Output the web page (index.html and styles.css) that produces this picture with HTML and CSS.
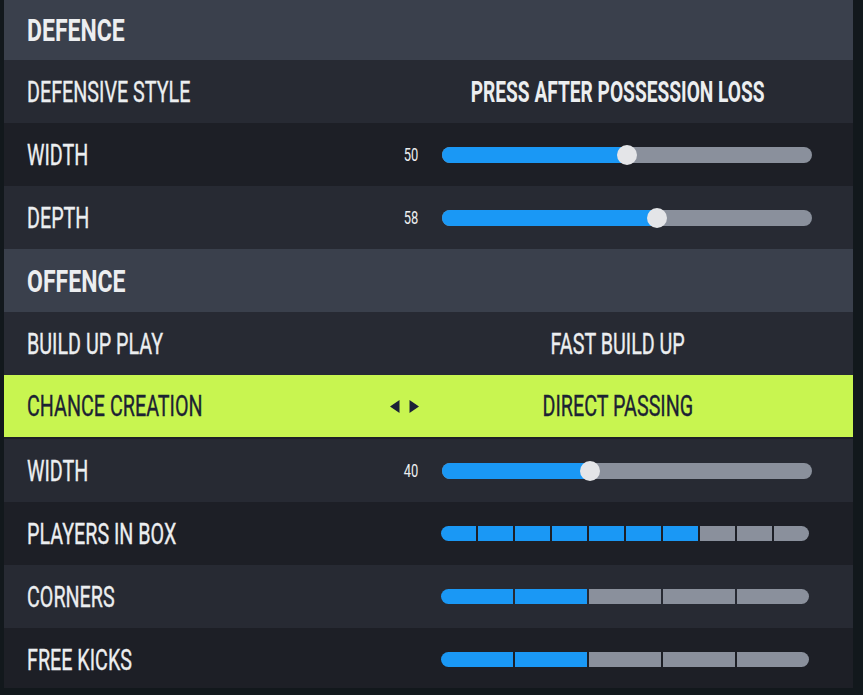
FILE: index.html
```html
<!DOCTYPE html>
<html lang="en">
<head>
    <meta charset="UTF-8">
    <meta name="viewport" content="width=device-width, initial-scale=1.0">
    <title>Team Tactics</title>
    <link rel="stylesheet" href="styles.css">
</head>
<body>
    <div class="panel">
        <div class="section first"><span class="text">DEFENCE</span></div>

        <div class="row light">
            <span class="label"><span class="text">DEFENSIVE STYLE</span></span>
            <div class="control">
                <span class="slot"></span>
                <div class="value bold"><span class="text">PRESS AFTER POSSESSION LOSS</span></div>
            </div>
        </div>

        <div class="row dark">
            <span class="label"><span class="text">WIDTH</span></span>
            <div class="control">
                <span class="slot num"><span class="text">50</span></span>
                <div class="track">
                    <div class="fill" style="width: 50%"></div>
                    <div class="thumb" style="left: 50%"></div>
                </div>
            </div>
        </div>

        <div class="row light">
            <span class="label"><span class="text">DEPTH</span></span>
            <div class="control">
                <span class="slot num"><span class="text">58</span></span>
                <div class="track">
                    <div class="fill" style="width: 58%"></div>
                    <div class="thumb" style="left: 58%"></div>
                </div>
            </div>
        </div>

        <div class="section"><span class="text">OFFENCE</span></div>

        <div class="row light">
            <span class="label"><span class="text">BUILD UP PLAY</span></span>
            <div class="control">
                <span class="slot"></span>
                <div class="value"><span class="text">FAST BUILD UP</span></div>
            </div>
        </div>

        <div class="row selected">
            <span class="label"><span class="text">CHANCE CREATION</span></span>
            <div class="control">
                <span class="slot arrows">
                    <svg width="29" height="13" viewBox="0 0 29 13">
                        <path d="M0 6.5 L9.5 0 L9.5 13 Z" fill="#1c2137"/>
                        <path d="M19.5 0 L29 6.5 L19.5 13 Z" fill="#1c2137"/>
                    </svg>
                </span>
                <div class="value"><span class="text">DIRECT PASSING</span></div>
            </div>
        </div>

        <div class="row light">
            <span class="label"><span class="text">WIDTH</span></span>
            <div class="control">
                <span class="slot num"><span class="text">40</span></span>
                <div class="track">
                    <div class="fill" style="width: 40%"></div>
                    <div class="thumb" style="left: 40%"></div>
                </div>
            </div>
        </div>

        <div class="row dark">
            <span class="label"><span class="text">PLAYERS IN BOX</span></span>
            <div class="control">
                <span class="slot"></span>
                <div class="steps">
                    <span class="step on"></span>
                    <span class="step on"></span>
                    <span class="step on"></span>
                    <span class="step on"></span>
                    <span class="step on"></span>
                    <span class="step on"></span>
                    <span class="step on"></span>
                    <span class="step"></span>
                    <span class="step"></span>
                    <span class="step"></span>
                </div>
            </div>
        </div>

        <div class="row light">
            <span class="label"><span class="text">CORNERS</span></span>
            <div class="control">
                <span class="slot"></span>
                <div class="steps">
                    <span class="step on"></span>
                    <span class="step on"></span>
                    <span class="step"></span>
                    <span class="step"></span>
                    <span class="step"></span>
                </div>
            </div>
        </div>

        <div class="row dark last">
            <span class="label"><span class="text">FREE KICKS</span></span>
            <div class="control">
                <span class="slot"></span>
                <div class="steps">
                    <span class="step on"></span>
                    <span class="step on"></span>
                    <span class="step"></span>
                    <span class="step"></span>
                    <span class="step"></span>
                </div>
            </div>
        </div>
    </div>
</body>
</html>
```

FILE: styles.css
```css
:root {
    --header: #3a404c;
    --row-light: #272a33;
    --row-dark: #1d1f26;
    --lime: #c8f550;
    --ink: #1c2233;
    --text: #eceef0;
    --blue: #1a98f5;
    --grey: #8a909c;
    --thumb: #e4e5e8;
}

* {
    margin: 0;
    padding: 0;
    box-sizing: border-box;
}

body {
    background-color: #12181c;
    font-family: Roboto, "Liberation Sans", sans-serif;
    color: var(--text);
    overflow: hidden;
}

.panel {
    width: 849px;
    margin-left: 4px;
    height: 688px;
    overflow: hidden;
}

.text {
    display: inline-block;
    white-space: nowrap;
    transform: scaleX(0.68);
    transform-origin: left center;
}

/* section headers */
.section {
    height: 63px;
    background-color: var(--header);
    display: flex;
    align-items: center;
    padding-left: 23px;
    font-size: 32px;
    font-weight: 700;
}

.section.first {
    height: 60px;
}

.section .text {
    transform: scaleX(0.72);
}

/* setting rows */
.row {
    height: 63px;
    display: flex;
    align-items: center;
    padding-left: 23px;
    font-size: 29px;
    font-weight: 400;
    -webkit-text-stroke: 0.35px currentColor;
}

.row.light {
    background-color: var(--row-light);
}

.row.dark {
    background-color: var(--row-dark);
}

.row.selected {
    background-color: var(--lime);
    color: var(--ink);
    border-bottom: 2px solid var(--row-dark);
    height: 64px;
}

.label {
    flex: 1;
}

.control {
    display: flex;
    align-items: center;
    margin-right: 41px;
}

.slot {
    width: 40px;
    margin-right: 24px;
    text-align: right;
}

.num {
    font-size: 19px;
    -webkit-text-stroke: 0;
}

.num .text {
    transform-origin: right center;
}

.arrows svg {
    display: block;
    margin-left: auto;
    margin-right: -1px;
}

.value {
    width: 352px;
    margin-right: 18px;
    display: flex;
    justify-content: center;
}

.value .text {
    transform-origin: center center;
}

.value.bold {
    font-weight: 700;
    -webkit-text-stroke: 0;
}

.value.bold .text {
    transform: scaleX(0.66);
}

/* slider */
.track {
    position: relative;
    width: 370px;
    height: 16px;
    border-radius: 8px;
    background-color: var(--grey);
}

.fill {
    height: 100%;
    border-radius: 8px 0 0 8px;
    background-color: var(--blue);
}

.thumb {
    position: absolute;
    top: -2px;
    width: 20px;
    height: 20px;
    margin-left: -10px;
    border-radius: 50%;
    background-color: var(--thumb);
}

/* stepped bars */
.steps {
    display: flex;
    gap: 2px;
    width: 368px;
    height: 15px;
    margin-left: -1px;
    margin-right: 3px;
}

.step {
    flex: 1;
    background-color: var(--grey);
}

.step.on {
    background-color: var(--blue);
}

.step:first-child {
    border-radius: 8px 0 0 8px;
}

.step:last-child {
    border-radius: 0 8px 8px 0;
}
```
